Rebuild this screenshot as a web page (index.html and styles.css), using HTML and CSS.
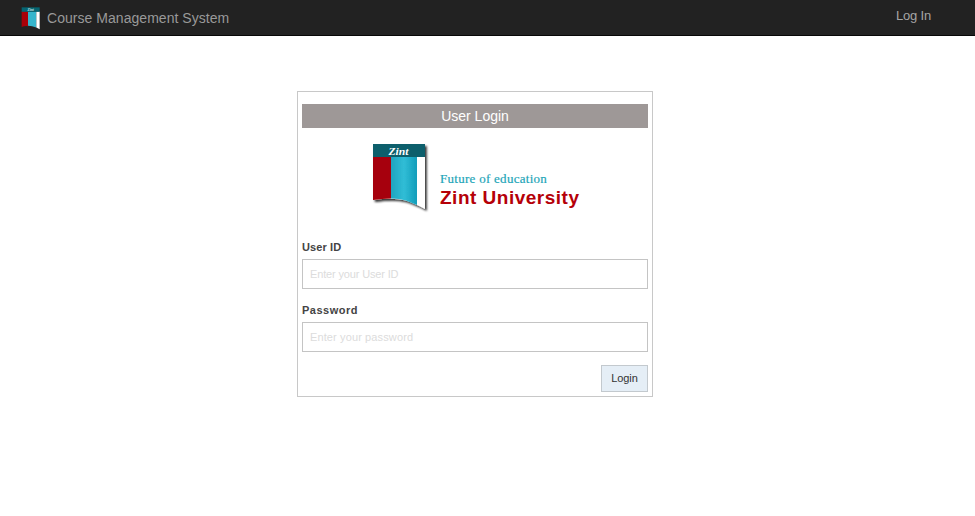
FILE: index.html
```html
<!DOCTYPE html>
<html lang="en">
<head>
<meta charset="utf-8">
<title>Course Management System</title>
<link rel="stylesheet" href="styles.css">
</head>
<body>
<header class="navbar">
  <a class="brand">
    <svg class="brand-mark" width="20" height="24" viewBox="0 0 60 70" preserveAspectRatio="none">
      <path d="M5 13H25V56Q13 55 5 58Z" fill="#a90008"/>
      <path d="M24 13H49V60Q36 55 24 55Z" fill="#35b5cc"/>
      <path d="M49 13H59V65L49 60Z" fill="#fff"/>
      <path d="M5 1H59V14H5Z" fill="#056572"/>
      <text x="32" y="11" text-anchor="middle" class="mark-text">Zint</text>
    </svg>
    <span class="brand-name">Course Management System</span>
  </a>
  <a class="nav-link">Log In</a>
</header>
<main class="login-card">
  <h1 class="card-title">User Login</h1>
  <div class="logo">
    <svg class="logo-mark" width="60" height="72" viewBox="0 0 60 72">
      <defs>
        <linearGradient id="page" x1="0" x2="1">
          <stop offset="0" stop-color="#20a4bf"/>
          <stop offset=".5" stop-color="#30bdd6"/>
          <stop offset="1" stop-color="#139dba"/>
        </linearGradient>
        <filter id="shadow" x="-10%" y="-10%" width="130%" height="130%">
          <feDropShadow dx="1.8" dy="2" stdDeviation="1.2" flood-color="#000" flood-opacity=".8"/>
        </filter>
      </defs>
      <g filter="url(#shadow)">
        <path d="M1 1H53V66Q42 60 34 57.500Q22 54.500 1 57Z" fill="#fff"/>
        <path d="M1 14H19V55.500Q10 55.500 1 57Z" fill="#a60007"/>
        <path d="M19 14H45V62Q39 59.500 34 57.500Q27 55.500 19 55.500Z" fill="url(#page)"/>
        <path d="M1 1H53V14H1Z" fill="#075e6c"/>
      </g>
      <text x="16.500" y="12" textLength="20" lengthAdjust="spacingAndGlyphs" class="logo-script">Zint</text>
    </svg>
    <div class="logo-words">
      <span class="tagline">Future of education</span>
      <strong class="university">Zint University</strong>
    </div>
  </div>
  <form class="form">
    <label class="label label-user" for="user">User ID</label>
    <input class="field" id="user" type="text" placeholder="Enter your User ID">
    <label class="label" for="pass">Password</label>
    <input class="field field-wide" id="pass" type="password" placeholder="Enter your password">
    <button class="submit" type="button">Login</button>
  </form>
</main>
</body>
</html>
```
FILE: styles.css
```css
* { box-sizing: border-box; }
body {
  margin: 0;
  background: #fff;
  font-family: "Liberation Sans", Arial, sans-serif;
}
.navbar {
  display: flex;
  justify-content: space-between;
  height: 36px;
  padding: 0 44px 0 20px;
  background: #222;
  border-bottom: 1px solid #080808;
  color: #999;
}
.brand { display: flex; gap: 7px; }
.brand-mark { margin-top: 7px; }
.mark-text { font: italic bold 11px "Liberation Serif", serif; fill: #cfe6e8; }
.brand-name { font-size: 14px; line-height: 36px; letter-spacing: 0.04px; }
.nav-link { font-size: 13px; line-height: 31px; letter-spacing: -0.2px; color: #a5a5a5; }
.login-card {
  display: flex;
  flex-direction: column;
  width: 356px;
  height: 306px;
  margin: 55px 0 0 297px;
  padding: 12px 4px 4px;
  border: 1px solid #c8c8c8;
}
.card-title {
  margin: 0;
  height: 24px;
  background: #9e9897;
  color: #fff;
  font-size: 14px;
  font-weight: 400;
  line-height: 25px;
  text-align: center;
}
.logo {
  display: flex;
  gap: 8px;
  height: 110px;
  padding: 15px 0 0 70px;
}
.logo-script { font: italic bold 10px "Liberation Serif", serif; fill: #fff; }
.logo-words { display: flex; flex-direction: column; padding-top: 29px; }
.tagline {
  font: 13px/13px "Liberation Serif", serif;
  letter-spacing: 0.28px;
  color: #22a5b8;
  -webkit-text-stroke: 0.2px #22a5b8;
}
.university {
  font-size: 19px;
  line-height: 25px;
  letter-spacing: 0.5px;
  color: #b50008;
  white-space: nowrap;
}
.form { display: flex; flex-direction: column; }
.label {
  height: 21px;
  color: #444;
  font-size: 11px;
  font-weight: 700;
  line-height: 18px;
  letter-spacing: 0.5px;
}
.label-user { letter-spacing: 0.1px; }
.field {
  height: 30px;
  margin: 0 0 12px;
  padding: 0 7px;
  border: 1px solid #c4c4c4;
  border-radius: 0;
  background: #fff;
  font: 11px "Liberation Sans", Arial, sans-serif;
  letter-spacing: -0.15px;
}
.field-wide { letter-spacing: 0.12px; }
.field::placeholder { color: #dcdcdc; opacity: 1; }
.submit {
  align-self: flex-end;
  width: 47px;
  height: 27px;
  margin-top: 1px;
  padding: 0 0 1px;
  border: 1px solid #c3c9ce;
  background: #e5eef6;
  color: #333;
  font: 11px "Liberation Sans", Arial, sans-serif;
  letter-spacing: -0.1px;
}
```
